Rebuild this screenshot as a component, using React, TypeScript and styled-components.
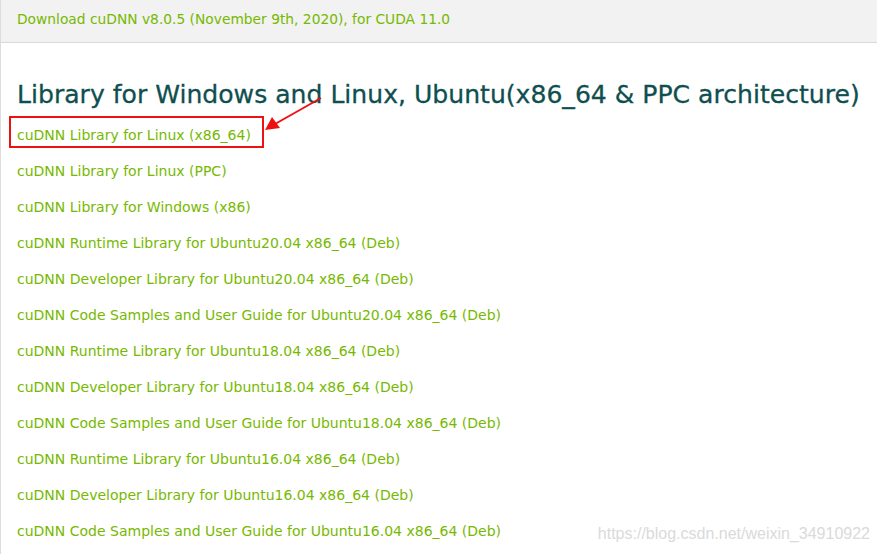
import styled, { createGlobalStyle } from 'styled-components'

const GREEN = '#76b900'
const TEAL = '#0f4f4f'

const links = [
  'cuDNN Library for Linux (x86_64)',
  'cuDNN Library for Linux (PPC)',
  'cuDNN Library for Windows (x86)',
  'cuDNN Runtime Library for Ubuntu20.04 x86_64 (Deb)',
  'cuDNN Developer Library for Ubuntu20.04 x86_64 (Deb)',
  'cuDNN Code Samples and User Guide for Ubuntu20.04 x86_64 (Deb)',
  'cuDNN Runtime Library for Ubuntu18.04 x86_64 (Deb)',
  'cuDNN Developer Library for Ubuntu18.04 x86_64 (Deb)',
  'cuDNN Code Samples and User Guide for Ubuntu18.04 x86_64 (Deb)',
  'cuDNN Runtime Library for Ubuntu16.04 x86_64 (Deb)',
  'cuDNN Developer Library for Ubuntu16.04 x86_64 (Deb)',
  'cuDNN Code Samples and User Guide for Ubuntu16.04 x86_64 (Deb)',
]

const GlobalStyle = createGlobalStyle`
  html, body {
    margin: 0;
    padding: 0;
    background: #fff;
  }
  body {
    font-family: "DejaVu Sans", sans-serif;
  }
`

export default function App() {
  return (
    <>
      <GlobalStyle />
      <Page>
        <Header>
          <HeaderLink>Download cuDNN v8.0.5 (November 9th, 2020), for CUDA 11.0</HeaderLink>
        </Header>
        <Body>
          <Title>Library for Windows and Linux, Ubuntu(x86_64 &amp; PPC architecture)</Title>
          <LinkList>
            {links.map((text, i) => (
              <LinkItem key={text}>
                <Link href="#" $marked={i === 0}>
                  {text}
                </Link>
              </LinkItem>
            ))}
          </LinkList>
        </Body>
        <Arrow width="80" height="50" viewBox="0 0 80 50">
          <line x1="62" y1="6" x2="16" y2="32" stroke="#ee1111" strokeWidth="2" />
          <polygon points="6,38 13,25 21,36" fill="#ee1111" />
        </Arrow>
        <Watermark>https://blog.csdn.net/weixin_34910922</Watermark>
      </Page>
    </>
  )
}

const Page = styled.div`
  position: relative;
  box-sizing: border-box;
  width: 879px;
  height: 554px;
  overflow: hidden;
  display: flex;
  flex-direction: column;
  border-left: 1px solid #dcdcdc;
`

const Header = styled.div`
  box-sizing: border-box;
  height: 43px;
  flex: none;
  margin-right: 2px;
  padding: 9px 0 0 16px;
  background: #f2f2f2;
  border-bottom: 1px solid #d9d9d9;
`

const HeaderLink = styled.a`
  font-size: 13.8px;
  line-height: 18px;
  color: ${GREEN};
`

const Body = styled.div`
  display: flex;
  flex-direction: column;
  gap: 5px;
  padding: 35px 0 0 16px;
`

const Title = styled.h2`
  margin: 0;
  font-size: 25.1px;
  line-height: 34px;
  font-weight: 500;
  color: ${TEAL};
  white-space: nowrap;
  -webkit-text-stroke: 0.3px ${TEAL};
`

const LinkList = styled.ul`
  list-style: none;
  margin: 0;
  padding: 0;
  display: flex;
  flex-direction: column;
`

const LinkItem = styled.li`
  height: 36px;
  display: flex;
  align-items: center;
`

const Link = styled.a<{ $marked?: boolean }>`
  position: relative;
  font-size: 14px;
  line-height: 16px;
  color: ${GREEN};
  text-decoration: none;

  &::after {
    content: '';
    display: ${({ $marked }) => ($marked ? 'block' : 'none')};
    position: absolute;
    left: -8px;
    top: -11px;
    width: 251px;
    height: 28px;
    border: 2px solid #ee1111;
  }
`

const Arrow = styled.svg`
  position: absolute;
  left: 258px;
  top: 92px;
`

const Watermark = styled.div`
  position: absolute;
  right: 9px;
  bottom: 11px;
  font-family: "Liberation Sans", Arial, sans-serif;
  font-size: 16px;
  color: #dadada;
`
